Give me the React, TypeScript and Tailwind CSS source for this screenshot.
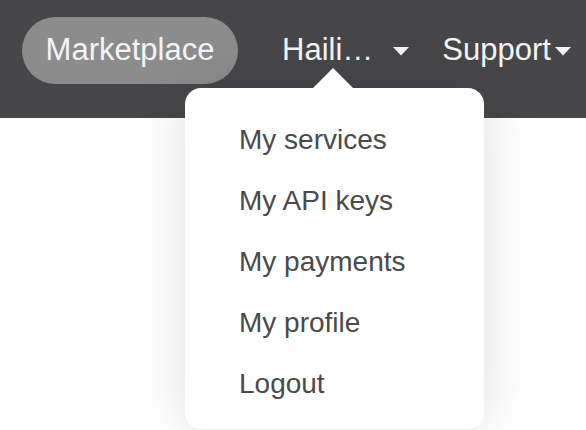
import React from "react";

function Caret({ className = "" }: { className?: string }) {
  return (
    <svg width="16" height="9" viewBox="0 0 16 9" className={className}>
      <polygon points="0,0 16,0 8,8.5" fill="#f4f4f4" />
    </svg>
  );
}

export default function App() {
  const items = ["My services", "My API keys", "My payments", "My profile", "Logout"];
  return (
    <div
      className="relative w-[586px] h-[430px] overflow-hidden bg-white"
      style={{ fontFamily: '"Liberation Sans", Arial, sans-serif' }}
    >
      <header className="h-[118px] bg-[#474749] flex items-start pt-[17px] pl-[22px]">
        <div className="h-[67px] w-[216px] rounded-full bg-[#8c8c8c] flex items-center justify-center text-[31px] text-[#f4f4f4]">
          Marketplace
        </div>
        <div className="ml-[44px] h-[67px] flex items-center text-[31px] text-[#f4f4f4]">
          <span>Haili…</span>
          <Caret className="ml-[20px] mt-[2px]" />
        </div>
        <div className="ml-[33px] h-[67px] flex items-center text-[31px] text-[#f4f4f4]">
          <span>Support</span>
          <Caret className="ml-[4px] mt-[2px]" />
        </div>
      </header>

      <div className="absolute left-[185px] top-[88px] w-[299px] rounded-[16px] bg-white shadow-[0_0_55px_rgba(0,0,0,0.13)] pt-[21px] pb-[15px]">
        <svg
          width="42"
          height="21"
          viewBox="0 0 42 21"
          className="absolute left-[127px] top-[-20px]"
        >
          <polygon points="0,21 21,0 42,21" fill="#ffffff" />
        </svg>
        {items.map((t) => (
          <div key={t} className="h-[61px] leading-[61px] pl-[54px] text-[28px] text-[#4a4a4a]">
            {t}
          </div>
        ))}
      </div>
    </div>
  );
}
